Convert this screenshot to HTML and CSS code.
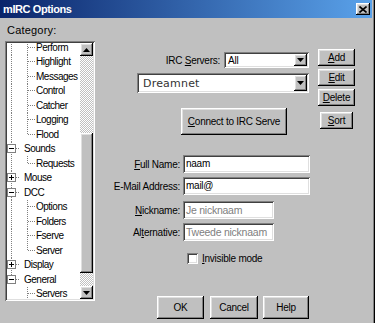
FILE: index.html
```html
<html>
<head>
    <link rel="stylesheet" href="styles.css">
</head>
<body>
    <div class="window">
        <div class="titlebar">
            <span class="title">mIRC Options</span>
            <span class="close">
                <svg width="8" height="7" viewBox="0 0 8 7"><path d="M0.5 0.5L7.5 6.5M7.5 0.5L0.5 6.5" stroke="#000" stroke-width="1.6"/></svg>
            </span>
        </div>
        <div class="content">
            <div class="left">
                <div class="cat-label">Category:</div>
                <div class="tree">
                    <div class="list">
                        <div class="rows">
                            <div class="row"><i class="cell ln"></i><i class="cell tee short"></i><span>Perform</span></div>
                            <div class="row"><i class="cell ln"></i><i class="cell tee short"></i><span>Highlight</span></div>
                            <div class="row"><i class="cell ln"></i><i class="cell tee short"></i><span>Messages</span></div>
                            <div class="row"><i class="cell ln"></i><i class="cell tee short"></i><span>Control</span></div>
                            <div class="row"><i class="cell ln"></i><i class="cell tee short"></i><span>Catcher</span></div>
                            <div class="row"><i class="cell ln"></i><i class="cell tee short"></i><span>Logging</span></div>
                            <div class="row"><i class="cell ln"></i><i class="cell elbow short"></i><span>Flood</span></div>
                            <div class="row"><i class="cell tee"><b class="box"></b></i><span>Sounds</span></div>
                            <div class="row"><i class="cell ln"></i><i class="cell elbow short"></i><span>Requests</span></div>
                            <div class="row"><i class="cell tee"><b class="box plus"></b></i><span>Mouse</span></div>
                            <div class="row"><i class="cell tee"><b class="box"></b></i><span>DCC</span></div>
                            <div class="row"><i class="cell ln"></i><i class="cell tee short"></i><span>Options</span></div>
                            <div class="row"><i class="cell ln"></i><i class="cell tee short"></i><span>Folders</span></div>
                            <div class="row"><i class="cell ln"></i><i class="cell tee short"></i><span>Fserve</span></div>
                            <div class="row"><i class="cell ln"></i><i class="cell elbow short"></i><span>Server</span></div>
                            <div class="row"><i class="cell tee"><b class="box plus"></b></i><span>Display</span></div>
                            <div class="row"><i class="cell elbow"><b class="box"></b></i><span>General</span></div>
                            <div class="row"><i class="cell"></i><i class="cell tee short"></i><span>Servers</span></div>
                        </div>
                    </div>
                    <div class="vscroll">
                        <div class="sbtn"><svg width="7" height="4" viewBox="0 0 7 4"><path d="M3.5 0L7 4H0z"/></svg></div>
                        <div class="track"><div class="thumb"></div></div>
                        <div class="sbtn"><svg width="7" height="4" viewBox="0 0 7 4"><path d="M0 0h7L3.5 4z"/></svg></div>
                    </div>
                </div>
            </div>

            <div class="right">
                <div class="top">
                    <div class="top-main">
                        <div class="srv-row">
                            <span>IRC <u>S</u>ervers:</span>
                            <div class="combo all">
                                <span class="val">All</span>
                                <span class="drop"><svg width="7" height="4" viewBox="0 0 7 4"><path d="M0 0h7L3.5 4z"/></svg></span>
                            </div>
                        </div>
                        <div class="combo net">
                            <span class="val">Dreamnet</span>
                            <span class="drop"><svg width="7" height="4" viewBox="0 0 7 4"><path d="M0 0h7L3.5 4z"/></svg></span>
                        </div>
                        <div class="btn connect"><span><u>C</u>onnect to IRC Serve</span></div>
                    </div>
                    <div class="side">
                        <div class="btn"><u>A</u>dd</div>
                        <div class="btn"><u>E</u>dit</div>
                        <div class="btn"><u>D</u>elete</div>
                        <div class="btn sort"><u>S</u>ort</div>
                    </div>
                </div>

                <div class="fields">
                    <div class="field"><label><u>F</u>ull Name:</label><div class="input">naam</div></div>
                    <div class="field"><label>E-Mail Address:</label><div class="input">mail@</div></div>
                    <div class="field gap"><label><u>N</u>ickname:</label><div class="input short hint">Je nicknaam</div></div>
                    <div class="field"><label>Al<u>t</u>ernative:</label><div class="input short hint">Tweede nicknaam</div></div>
                </div>

                <div class="check-row">
                    <span class="checkbox"></span>
                    <span><u>I</u>nvisible mode</span>
                </div>

                <div class="actions">
                    <div class="btn ok">OK</div>
                    <div class="btn cancel">Cancel</div>
                    <div class="btn help">Help</div>
                </div>
            </div>
        </div>
    </div>
</body>
</html>
```

FILE: styles.css
```css
body {
    margin: 0;
    background-color: #c0c0c0;
    font-family: "Liberation Sans", Arial, sans-serif;
    font-size: 10px;
    letter-spacing: -0.25px;
    color: #000;
}
.window {
    width: 375px;
    height: 323px;
    box-sizing: border-box;
    padding-right: 3px;
    background-color: #c0c0c0;
    box-shadow: inset -1px 0 #000, inset -2px 0 #808080;
    display: flex;
    flex-direction: column;
    overflow: hidden;
}
.titlebar {
    height: 18px;
    flex: none;
    display: flex;
    align-items: center;
    justify-content: space-between;
    padding: 0 2px 0 3px;
    background: linear-gradient(to right, #0a246a, #5aa2ea);
}
.title {
    color: #fff;
    font-weight: bold;
    font-size: 11px;
    letter-spacing: -0.4px;
}
.close {
    width: 14px;
    height: 12px;
    display: flex;
    align-items: center;
    justify-content: center;
    background-color: #c0c0c0;
    box-shadow: inset -1px -1px #000, inset 1px 1px #fff, inset -2px -2px #808080, inset 2px 2px #dfdfdf;
}

/* raised and sunken 3d edges */
.btn, .sbtn, .thumb, .drop {
    background-color: #c0c0c0;
    box-shadow: inset -1px -1px #000, inset 1px 1px #fff, inset -2px -2px #808080, inset 2px 2px #dfdfdf;
}
.tree, .combo, .input, .checkbox {
    background-color: #fff;
    box-shadow: inset 1px 1px #808080, inset -1px -1px #fff, inset 2px 2px #404040, inset -2px -2px #dfdfdf;
}

.content {
    flex: 1;
    display: flex;
}
.left {
    width: 90px;
    margin-left: 5px;
    display: flex;
    flex-direction: column;
}
.cat-label {
    font-size: 11px;
    letter-spacing: 0.2px;
    line-height: 14px;
    margin-top: 5px;
    margin-left: 2px;
}
.tree {
    margin-top: 4px;
    height: 260px;
    box-sizing: border-box;
    padding: 2px;
    display: flex;
}
.list {
    flex: 1;
    overflow: hidden;
}
.rows {
    margin-top: -3px;
}
.row {
    display: flex;
    align-items: center;
    height: 14.5px;
    white-space: nowrap;
    letter-spacing: -0.5px;
}
.row span {
    padding-left: 1px;
    line-height: 9px;
}
.cell {
    flex: none;
    width: 16px;
    height: 100%;
    display: flex;
    align-items: center;
}
.cell.short {
    width: 12px;
}
.ln {
    background: repeating-linear-gradient(to bottom, #808080 0 1px, transparent 1px 2px) 4px 0 / 1px 100% no-repeat;
}
.tee {
    background:
        repeating-linear-gradient(to right, #808080 0 1px, transparent 1px 2px) 5px 50% / 7px 1px no-repeat,
        repeating-linear-gradient(to bottom, #808080 0 1px, transparent 1px 2px) 4px 0 / 1px 100% no-repeat;
}
.elbow {
    background:
        repeating-linear-gradient(to right, #808080 0 1px, transparent 1px 2px) 5px 50% / 7px 1px no-repeat,
        repeating-linear-gradient(to bottom, #808080 0 1px, transparent 1px 2px) 4px 0 / 1px 50% no-repeat;
}
.box {
    width: 9px;
    height: 9px;
    box-sizing: border-box;
    border: 1px solid #808080;
    background: linear-gradient(#000, #000) center / 5px 1px no-repeat, #fff;
}
.box.plus {
    background:
        linear-gradient(#000, #000) center / 5px 1px no-repeat,
        linear-gradient(#000, #000) center / 1px 5px no-repeat,
        #fff;
}
.vscroll {
    width: 13px;
    flex: none;
    display: flex;
    flex-direction: column;
}
.sbtn {
    height: 13px;
    flex: none;
    display: flex;
    align-items: center;
    justify-content: center;
}
.track {
    flex: 1;
    display: flex;
    flex-direction: column;
    background: repeating-conic-gradient(#c0c0c0 0 25%, #fff 0 50%) 0 0 / 2px 2px;
}
.thumb {
    margin-top: 77px;
    height: 140px;
}

.right {
    flex: 1;
    display: flex;
    flex-direction: column;
}
.top {
    display: flex;
}
.top-main {
    margin-left: 42px;
    width: 172px;
    display: flex;
    flex-direction: column;
}
.srv-row {
    margin-top: 34px;
    display: flex;
    justify-content: flex-end;
    align-items: center;
    gap: 4px;
}
.combo {
    display: flex;
    align-items: stretch;
    box-sizing: border-box;
    padding: 2px;
}
.combo .val {
    flex: 1;
    padding-left: 2px;
    display: flex;
    align-items: center;
}
.drop {
    width: 13px;
    display: flex;
    align-items: center;
    justify-content: center;
}
.combo.all {
    width: 85px;
    height: 16px;
}
.combo.net {
    margin-top: 5px;
    height: 20px;
}
.combo.net .val {
    font-family: "DejaVu Sans", sans-serif;
    font-size: 11px;
    letter-spacing: 0.2px;
    color: #333;
    padding-left: 4px;
}
.btn {
    display: flex;
    align-items: center;
    justify-content: center;
    box-sizing: border-box;
}
.connect {
    margin-top: 15px;
    margin-left: 44px;
    width: 106px;
    height: 27px;
}
.side {
    margin-left: 9px;
    padding-top: 31px;
    width: 37px;
    display: flex;
    flex-direction: column;
    gap: 3px;
}
.side .btn {
    height: 17px;
}
.side .sort {
    width: 33px;
    margin-top: 3px;
    align-self: center;
}

.fields {
    margin-top: 20px;
}
.field {
    display: flex;
    align-items: center;
    height: 18px;
}
.field + .field {
    margin-top: 4px;
}
.field.gap {
    margin-top: 6px;
}
.field label {
    width: 85px;
    margin-right: 3px;
    text-align: right;
    white-space: nowrap;
}
.input {
    width: 127px;
    height: 18px;
    box-sizing: border-box;
    padding: 2px 3px;
    line-height: 14px;
}
.input.short {
    width: 91px;
}
.input.hint {
    color: #808080;
    font-size: 10.5px;
}
.check-row {
    margin-top: 12px;
    margin-left: 92px;
    display: flex;
    align-items: center;
    gap: 4px;
    height: 11px;
}
.checkbox {
    width: 11px;
    height: 11px;
}
.actions {
    margin-top: 32px;
    margin-left: 62px;
    display: flex;
    gap: 5px;
}
.actions .btn {
    height: 23px;
}
.ok {
    width: 47px;
    margin-right: 1px;
}
.cancel {
    width: 48px;
}
.help {
    width: 46px;
}
```
